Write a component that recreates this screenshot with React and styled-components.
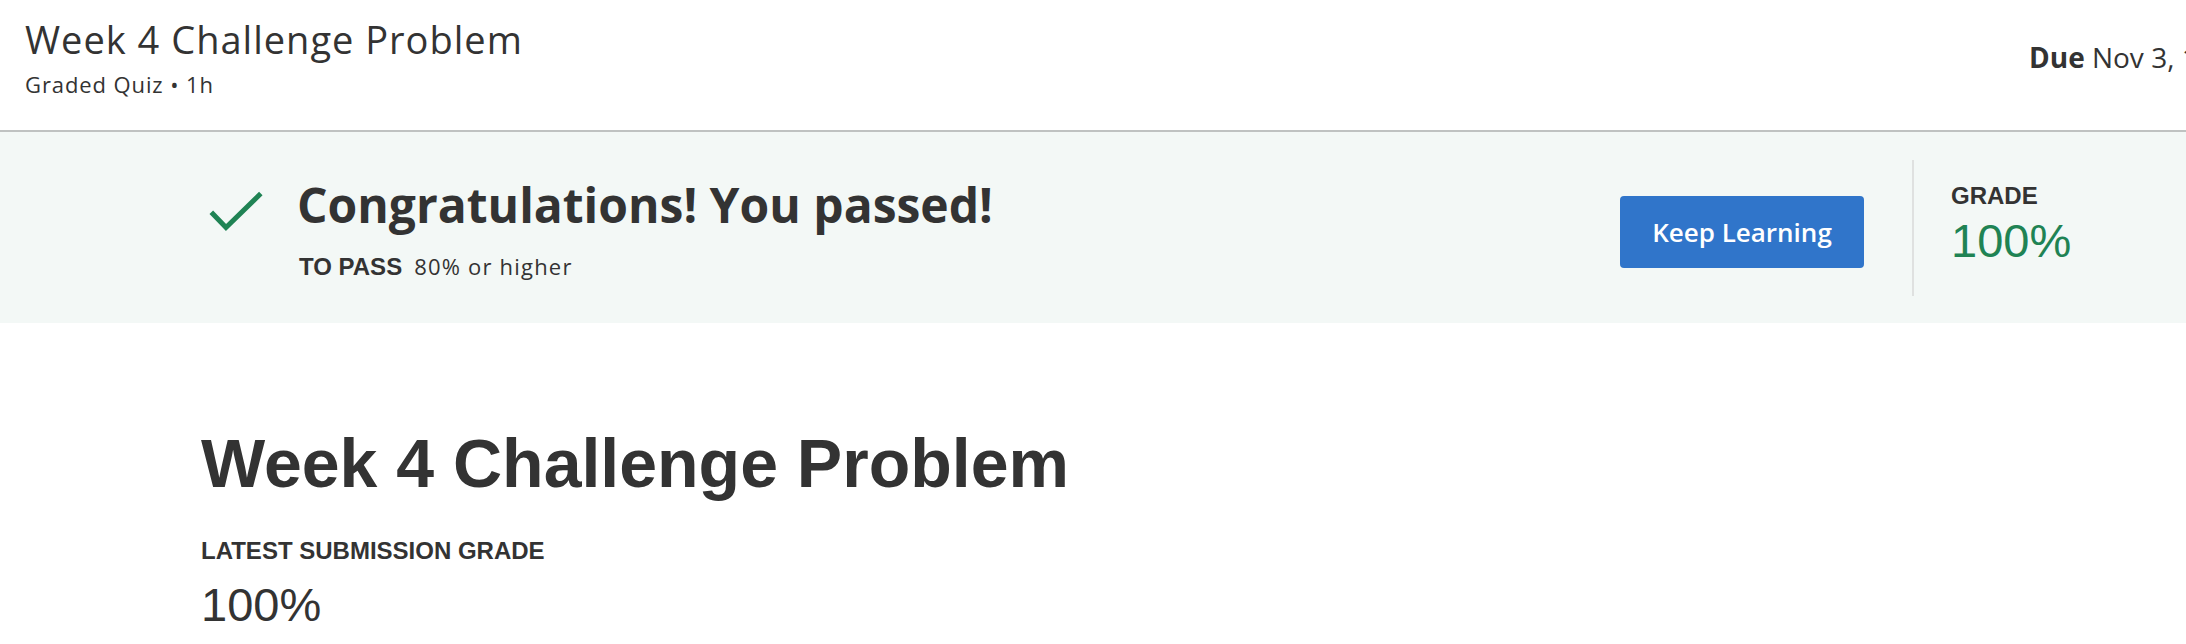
import React from 'react'
import styled, { createGlobalStyle } from 'styled-components'

const GlobalStyle = createGlobalStyle`
  body{
    margin: 0;
    background: #fff;
    overflow: hidden;
    color: #333;
    font-family: "Open Sans", "Liberation Sans", sans-serif;
  }
`

const Header = styled.header`
  display: flex;
  align-items: flex-start;
  height: 132px;
  box-sizing: border-box;
  padding: 15px 0 0 25px;
  border-bottom: 2px solid #bfc2c1;
`

const TitleBlock = styled.div`
  flex: 1;
  min-width: 0;
`

const PageTitle = styled.h1`
  margin: 0;
  font-size: 38px;
  line-height: 48px;
  font-weight: 400;
  letter-spacing: 1px;
  color: #333;
`

const Meta = styled.div`
  margin-top: 6px;
  font-size: 22px;
  line-height: 30px;
  letter-spacing: 0.9px;
  color: #333;
`

const Due = styled.div`
  flex: 0 0 157px;
  margin-top: 23px;
  font-size: 28px;
  line-height: 38px;
  white-space: nowrap;
  overflow: hidden;
  b{ font-weight: 700; }
`

const Banner = styled.section`
  display: flex;
  align-items: flex-start;
  height: 191px;
  box-sizing: border-box;
  padding-left: 207px;
  background: #f3f8f6;
`

const Passed = styled.div`
  flex: 1;
  display: flex;
  align-items: flex-start;
  gap: 34px;
  margin-top: 44px;
  svg{ margin-top: 12px; flex-shrink: 0; }
`

const Headline = styled.h2`
  margin: 0;
  font-size: 48px;
  line-height: 58px;
  font-weight: 700;
  color: #333;
`

const PassRule = styled.div`
  display: flex;
  align-items: baseline;
  gap: 12px;
  margin: 17px 0 0 2px;
  line-height: 30px;
`

const PassValue = styled.span`
  font-size: 22px;
  letter-spacing: 1.2px;
`

const Button = styled.button`
  width: 244px;
  height: 72px;
  margin: 64px 48px 0 0;
  border: 0;
  border-radius: 4px;
  background: #3075ca;
  color: #fff;
  font-family: "Open Sans", sans-serif;
  font-size: 26px;
  font-weight: 600;
  cursor: pointer;
`

const GradeBox = styled.div`
  flex: 0 0 274px;
  box-sizing: border-box;
  margin-top: 28px;
  padding: 22px 0 29px 37px;
  border-left: 2px solid #dfe1e0;
`

const Label = styled.div`
  font-family: "Liberation Sans", Arial, sans-serif;
  font-size: 24px;
  line-height: 28px;
  font-weight: 700;
  color: #333;
`

const Score = styled.div`
  margin-top: ${p => p.gap}px;
  font-family: "Liberation Sans", Arial, sans-serif;
  font-size: 47px;
  line-height: 52px;
  font-weight: 400;
  color: ${p => p.color || '#333'};
`

const Main = styled.main`
  padding: 100px 0 0 201px;
`

const BigTitle = styled.h1`
  margin: 0 0 34px;
  font-family: "Liberation Sans", Arial, sans-serif;
  font-size: 68px;
  line-height: 80px;
  font-weight: 700;
  color: #333;
`

function Check(){
  return(
    <svg width="56" height="44" viewBox="0 0 56 44">
      <polyline points="4.3,24.2 19,39.5 53.8,5.5" fill="none" stroke="#1f8354" strokeWidth="5" strokeLinecap="butt" strokeLinejoin="miter" />
    </svg>
  )
}

export default function App(){
  return(
    <>
      <GlobalStyle />
      <Header>
        <TitleBlock>
          <PageTitle>Week 4 Challenge Problem</PageTitle>
          <Meta>Graded Quiz • 1h</Meta>
        </TitleBlock>
        <Due><b>Due</b> Nov 3, 11:59 PM PST</Due>
      </Header>
      <Banner>
        <Passed>
          <Check />
          <div>
            <Headline>Congratulations! You passed!</Headline>
            <PassRule>
              <Label as="span">TO PASS</Label>
              <PassValue>80% or higher</PassValue>
            </PassRule>
          </div>
        </Passed>
        <Button>Keep Learning</Button>
        <GradeBox>
          <Label>GRADE</Label>
          <Score gap={5} color="#1f8354">100%</Score>
        </GradeBox>
      </Banner>
      <Main>
        <BigTitle>Week 4 Challenge Problem</BigTitle>
        <Label>LATEST SUBMISSION GRADE</Label>
        <Score gap={14}>100%</Score>
      </Main>
    </>
  )
}
